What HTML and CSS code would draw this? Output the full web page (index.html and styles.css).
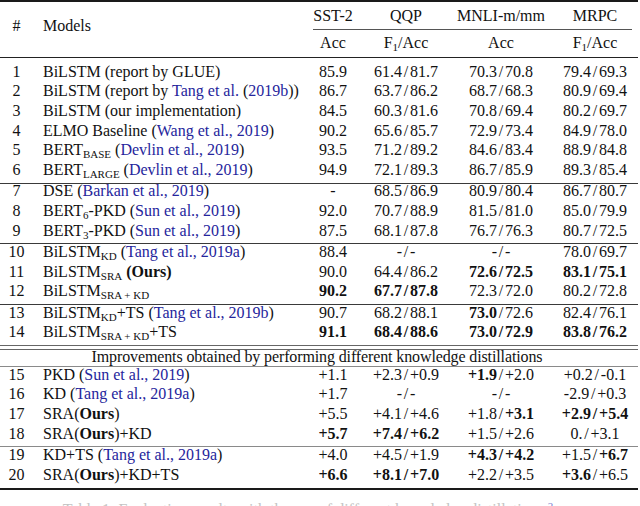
FILE: index.html
```html
<!DOCTYPE html>
<html>
<head>
<meta charset="utf-8">
<link rel="stylesheet" href="styles.css">
</head>
<body>
<div class="table">
  <div class="head">
    <div class="cell span">#</div>
    <div class="cell model span">Models</div>
    <div class="cell h1 c3">SST-2</div>
    <div class="cell h1 c4">QQP</div>
    <div class="cell h1 c5">MNLI-m/mm</div>
    <div class="cell h1 c6">MRPC</div>
    <div class="cmid"></div>
    <div class="cell h2 c3">Acc</div>
    <div class="cell h2 c4">F<sub class="s">1</sub>/Acc</div>
    <div class="cell h2 c5">Acc</div>
    <div class="cell h2 c6">F<sub class="s">1</sub>/Acc</div>
  </div>

  <div class="grp g1">
    <div class="cell">1</div><div class="cell model">BiLSTM (report by GLUE)</div><div class="cell">85.9</div><div class="cell num">61.4 / 81.7</div><div class="cell num">70.3 / 70.8</div><div class="cell num">79.4 / 69.3</div>
    <div class="cell">2</div><div class="cell model">BiLSTM (report by <span class="ref">Tang et al.</span> (<span class="ref">2019b</span>))</div><div class="cell">86.7</div><div class="cell num">63.7 / 86.2</div><div class="cell num">68.7 / 68.3</div><div class="cell num">80.9 / 69.4</div>
    <div class="cell">3</div><div class="cell model">BiLSTM (our implementation)</div><div class="cell">84.5</div><div class="cell num">60.3 / 81.6</div><div class="cell num">70.8 / 69.4</div><div class="cell num">80.2 / 69.7</div>
    <div class="cell">4</div><div class="cell model">ELMO Baseline (<span class="ref">Wang et al., 2019</span>)</div><div class="cell">90.2</div><div class="cell num">65.6 / 85.7</div><div class="cell num">72.9 / 73.4</div><div class="cell num">84.9 / 78.0</div>
    <div class="cell">5</div><div class="cell model">BERT<sub class="s">BASE</sub> (<span class="ref">Devlin et al., 2019</span>)</div><div class="cell">93.5</div><div class="cell num">71.2 / 89.2</div><div class="cell num">84.6 / 83.4</div><div class="cell num">88.9 / 84.8</div>
    <div class="cell">6</div><div class="cell model">BERT<sub class="s">LARGE</sub> (<span class="ref">Devlin et al., 2019</span>)</div><div class="cell">94.9</div><div class="cell num">72.1 / 89.3</div><div class="cell num">86.7 / 85.9</div><div class="cell num">89.3 / 85.4</div>
  </div>

  <div class="grp rule">
    <div class="cell">7</div><div class="cell model">DSE (<span class="ref">Barkan et al., 2019</span>)</div><div class="cell">-</div><div class="cell num">68.5 / 86.9</div><div class="cell num">80.9 / 80.4</div><div class="cell num">86.7 / 80.7</div>
    <div class="cell">8</div><div class="cell model">BERT<sub class="s">6</sub>-PKD (<span class="ref">Sun et al., 2019</span>)</div><div class="cell">92.0</div><div class="cell num">70.7 / 88.9</div><div class="cell num">81.5 / 81.0</div><div class="cell num">85.0 / 79.9</div>
    <div class="cell">9</div><div class="cell model">BERT<sub class="s">3</sub>-PKD (<span class="ref">Sun et al., 2019</span>)</div><div class="cell">87.5</div><div class="cell num">68.1 / 87.8</div><div class="cell num">76.7 / 76.3</div><div class="cell num">80.7 / 72.5</div>
  </div>

  <div class="grp rule">
    <div class="cell">10</div><div class="cell model">BiLSTM<sub class="s">KD</sub> (<span class="ref">Tang et al., 2019a</span>)</div><div class="cell">88.4</div><div class="cell num">- / -</div><div class="cell num">- / -</div><div class="cell num">78.0 / 69.7</div>
    <div class="cell">11</div><div class="cell model">BiLSTM<sub class="s">SRA</sub> <b>(Ours)</b></div><div class="cell">90.0</div><div class="cell num">64.4 / 86.2</div><div class="cell num"><b>72.6 / 72.5</b></div><div class="cell num"><b>83.1 / 75.1</b></div>
    <div class="cell">12</div><div class="cell model">BiLSTM<sub class="s">SRA + KD</sub></div><div class="cell"><b>90.2</b></div><div class="cell num"><b>67.7 / 87.8</b></div><div class="cell num">72.3 / 72.0</div><div class="cell num">80.2 / 72.8</div>
  </div>

  <div class="grp rule">
    <div class="cell">13</div><div class="cell model">BiLSTM<sub class="s">KD</sub>+TS (<span class="ref">Tang et al., 2019b</span>)</div><div class="cell">90.7</div><div class="cell num">68.2 / 88.1</div><div class="cell num"><b>73.0</b> / 72.6</div><div class="cell num">82.4 / 76.1</div>
    <div class="cell">14</div><div class="cell model">BiLSTM<sub class="s">SRA + KD</sub>+TS</div><div class="cell"><b>91.1</b></div><div class="cell num"><b>68.4 / 88.6</b></div><div class="cell num"><b>73.0 / 72.9</b></div><div class="cell num"><b>83.8 / 76.2</b></div>
  </div>

  <div class="dbl">
    <div class="imp">Improvements obtained by performing different knowledge distillations</div>
  </div>

  <div class="grp rule light">
    <div class="cell">15</div><div class="cell model">PKD (<span class="ref">Sun et al., 2019</span>)</div><div class="cell">+1.1</div><div class="cell num">+2.3 / +0.9</div><div class="cell num"><b>+1.9</b> / +2.0</div><div class="cell num">+0.2 / -0.1</div>
    <div class="cell">16</div><div class="cell model">KD (<span class="ref">Tang et al., 2019a</span>)</div><div class="cell">+1.7</div><div class="cell num">- / -</div><div class="cell num">- / -</div><div class="cell num">-2.9 / +0.3</div>
    <div class="cell">17</div><div class="cell model">SRA(<b>Ours</b>)</div><div class="cell">+5.5</div><div class="cell num">+4.1 / +4.6</div><div class="cell num">+1.8 / <b>+3.1</b></div><div class="cell num"><b>+2.9 / +5.4</b></div>
    <div class="cell">18</div><div class="cell model">SRA(<b>Ours</b>)+KD</div><div class="cell"><b>+5.7</b></div><div class="cell num"><b>+7.4 / +6.2</b></div><div class="cell num">+1.5 / +2.6</div><div class="cell num">0. / +3.1</div>
  </div>

  <div class="grp rule light last">
    <div class="cell">19</div><div class="cell model">KD+TS (<span class="ref">Tang et al., 2019a</span>)</div><div class="cell">+4.0</div><div class="cell num">+4.5 / +1.9</div><div class="cell num"><b>+4.3 / +4.2</b></div><div class="cell num">+1.5 / <b>+6.7</b></div>
    <div class="cell">20</div><div class="cell model">SRA(<b>Ours</b>)+KD+TS</div><div class="cell"><b>+6.6</b></div><div class="cell num"><b>+8.1 / +7.0</b></div><div class="cell num">+2.2 / +3.5</div><div class="cell num"><b>+3.6</b> / +6.5</div>
  </div>
</div>
<p class="caption">Table 1: Evaluation results with the use of different knowledge distillations.<sup class="fn">2</sup></p>
</body>
</html>
```

FILE: styles.css
```css
* { box-sizing: border-box; margin: 0; padding: 0; }

html, body {
  background: #fff;
}

body {
  width: 640px;
  height: 506px;
  overflow: hidden;
  font-family: "Liberation Serif", "Times New Roman", serif;
  font-size: 16px;
  color: #111;
}

.table {
  width: 638px;
  border-top: 2px solid #1a1a1a;
  border-bottom: 2px solid #1a1a1a;
  padding-bottom: 1px;
}

.head,
.grp {
  display: grid;
  grid-template-columns: 33px 267px 66px 80px 110px 78px;
}

.cell {
  line-height: 13.6px;
  white-space: nowrap;
  text-align: center;
}

.model {
  text-align: left;
  padding-left: 10px;
}

.num {
  word-spacing: -2.2px;
}

.ref {
  color: #25259c;
}

.s {
  font-size: 11px;
  line-height: 0;
  vertical-align: -2.5px;
  word-spacing: 0;
}

/* header */
.head {
  grid-template-rows: 28px 27px;
  border-bottom: 1px solid #222;
}

.head .span {
  grid-row: 1 / 3;
  padding-top: 17px;
}

.h1 { grid-row: 1; padding-top: 6.6px; }
.h2 { grid-row: 2; padding-top: 6px; }
.c3 { grid-column: 3; }
.c4 { grid-column: 4; }
.c5 { grid-column: 5; }
.c6 { grid-column: 6; }

.cmid {
  grid-row: 1;
  grid-column: 3 / 7;
  align-self: end;
  border-bottom: 1px solid #555;
  margin: 0 2px 0 13px;
}

/* body groups */
.grp {
  grid-auto-rows: 19.7px;
}

.g1 {
  padding-top: 6.6px;
}

.rule {
  border-top: 1px solid #3a3a3a;
  padding-top: 0.6px;
}

.rule.light {
  border-top-color: #8a8a8a;
}

.dbl {
  border-top: 1px solid #666;
  padding-top: 2.5px;
}

.imp {
  border-top: 1px solid #666;
  height: 17.65px;
  line-height: 13.6px;
  text-align: center;
  padding-right: 4px;
  letter-spacing: -0.12px;
  white-space: nowrap;
}

.caption {
  margin-top: 13px;
  line-height: 13.6px;
  text-align: center;
  width: 616px;
  color: #c4c4c4;
  white-space: nowrap;
}

.fn {
  color: #8080d0;
  font-size: 11px;
  vertical-align: 5px;
  line-height: 0;
}
```
